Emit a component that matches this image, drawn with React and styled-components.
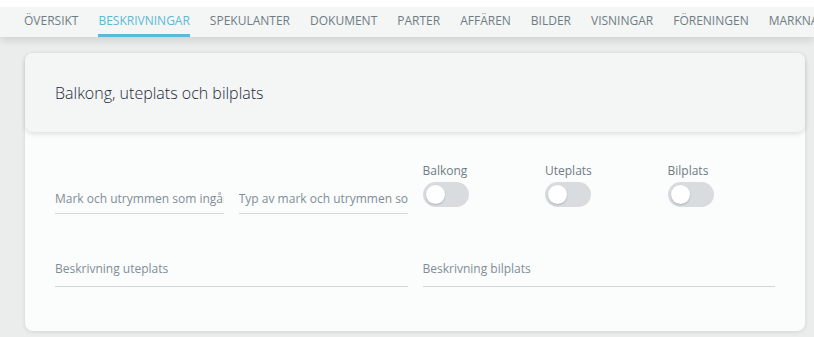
import React from 'react';
import styled, { createGlobalStyle } from 'styled-components';

const GlobalStyle = createGlobalStyle`
  body {
    margin: 0;
    background: #ebecec;
    font-family: "Open Sans", "Liberation Sans", sans-serif;
  }
`;

const Page = styled.div`
  width: 814px;
  height: 337px;
  overflow: hidden;
  background: #ebecec;
  border-top: 7px solid #ffffff;
  box-sizing: border-box;
`;

const TabBar = styled.nav`
  height: 30px;
  background: #f4f5f5;
  display: flex;
  gap: 20px;
  padding-left: 24px;
  box-shadow: 0 3px 8px rgba(0, 0, 0, 0.12);
  white-space: nowrap;
  position: relative;
  z-index: 1;
`;

const Tab = styled.div`
  font-size: 12px;
  line-height: 27px;
  text-transform: uppercase;
  color: ${p => (p.active ? '#5bbad4' : '#6e7d84')};
  border-bottom: 3px solid ${p => (p.active ? '#5bbad4' : 'transparent')};
`;

const Content = styled.div`
  padding: 16px 9px 0 25px;
`;

const Card = styled.section`
  background: #fbfcfc;
  border-radius: 8px;
  box-shadow: 0 1px 4px rgba(0, 0, 0, 0.1);
  height: 278px;
`;

const CardHeader = styled.header`
  height: 79px;
  background: #f4f5f5;
  border-radius: 8px;
  box-shadow: 0 2px 5px rgba(0, 0, 0, 0.12);
  display: flex;
  align-items: center;
  padding-left: 30px;
  font-size: 16px;
  font-weight: 300;
  color: #1f2b38;
`;

const FormGrid = styled.div`
  display: grid;
  grid-template-columns: repeat(12, 1fr);
  column-gap: 15px;
  row-gap: 46px;
  padding: 30px 30px 0 30px;
  align-items: end;
`;

const Field = styled.div`
  grid-column: span ${p => p.span};
  border-bottom: 1px solid #d3d8da;
  padding-bottom: ${p => p.pad || 6}px;
  font-size: 12px;
  color: #7f8e96;
  white-space: nowrap;
  overflow: hidden;
`;

const ToggleCell = styled.div`
  grid-column: span 2;
  display: flex;
  flex-direction: column;
  gap: 3px;
  padding-bottom: 7px;
  font-size: 12px;
  color: #6e7d84;
`;

const Switch = styled.div`
  width: 46px;
  height: 25px;
  border-radius: 13px;
  background: #d8dcde;
  display: flex;
  align-items: center;
  padding-left: 3px;
  box-sizing: border-box;

  &::after {
    content: '';
    width: 19px;
    height: 19px;
    border-radius: 50%;
    background: #ffffff;
    box-shadow: 0 1px 2px rgba(0, 0, 0, 0.2);
  }
`;

const tabs = ['Översikt', 'Beskrivningar', 'Spekulanter', 'Dokument', 'Parter', 'Affären', 'Bilder', 'Visningar', 'Föreningen', 'Marknadsföring'];

export default function App() {
  return (
    <Page>
      <GlobalStyle />
      <TabBar>
        {tabs.map(t => (
          <Tab key={t} active={t === 'Beskrivningar'}>{t}</Tab>
        ))}
      </TabBar>
      <Content>
        <Card>
          <CardHeader>Balkong, uteplats och bilplats</CardHeader>
          <FormGrid>
            <Field span={3}>Mark och utrymmen som ingår</Field>
            <Field span={3}>Typ av mark och utrymmen som ingår</Field>
            <ToggleCell>Balkong<Switch /></ToggleCell>
            <ToggleCell>Uteplats<Switch /></ToggleCell>
            <ToggleCell>Bilplats<Switch /></ToggleCell>
            <Field span={6} pad={9}>Beskrivning uteplats</Field>
            <Field span={6} pad={9}>Beskrivning bilplats</Field>
          </FormGrid>
        </Card>
      </Content>
    </Page>
  );
}
